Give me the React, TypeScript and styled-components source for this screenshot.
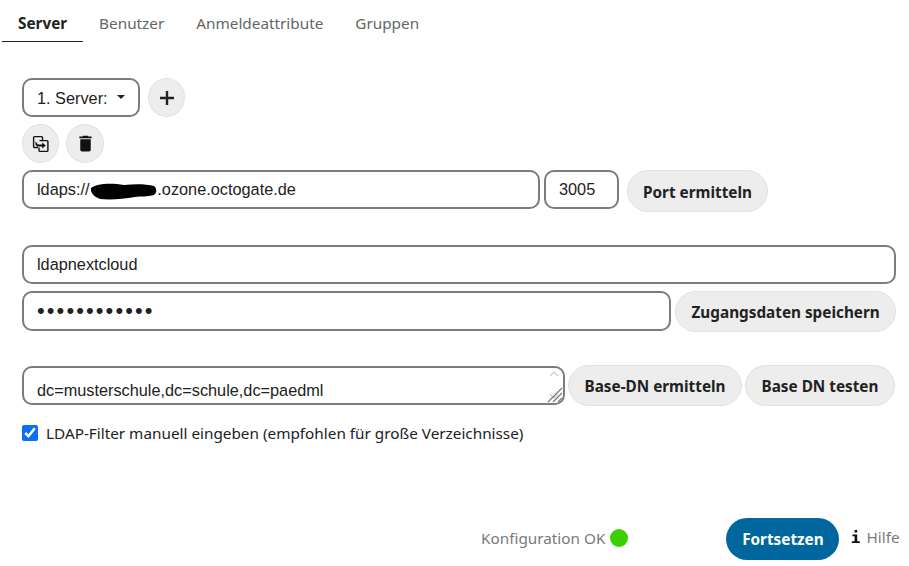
import React from 'react'
import styled, { createGlobalStyle } from 'styled-components'

const UI_FONT = `"Noto Sans", "Open Sans", sans-serif`
const FIELD_FONT = `"Liberation Sans", Arial, sans-serif`

const GlobalStyle = createGlobalStyle`
  html, body {
    margin: 0;
    padding: 0;
    background: #fff;
  }
  * {
    box-sizing: border-box;
  }
`

const App: React.FC = () => {
  return (
    <>
      <GlobalStyle />
      <Page>
        <Tabs>
          <Tab $active>Server</Tab>
          <Tab>Benutzer</Tab>
          <Tab>Anmeldeattribute</Tab>
          <Tab>Gruppen</Tab>
        </Tabs>

        <Form>
          <Row>
            <ServerSelect>
              1. Server:
              <Caret />
            </ServerSelect>
            <IconButton aria-label="Server hinzufügen">
              <svg width="24" height="24" viewBox="0 0 24 24">
                <path d="M19 13.2h-5.8V19h-2.4v-5.8H5v-2.4h5.8V5h2.4v5.8H19z" fill="#222" />
              </svg>
            </IconButton>
          </Row>

          <ActionRow>
            <IconButton aria-label="Konfiguration kopieren">
              <svg width="18" height="18" viewBox="0 0 18 18" fill="none">
                <path
                  d="M6 12.5H2.6a1 1 0 0 1-1-1V2.6a1 1 0 0 1 1-1h6.9a1 1 0 0 1 1 1V5.5"
                  stroke="#111"
                  strokeWidth="1.4"
                />
                <path
                  d="M7.5 5.6h7.4a1 1 0 0 1 1 1v8.8a1 1 0 0 1-1 1H8a1 1 0 0 1-1-1V12.5"
                  stroke="#111"
                  strokeWidth="1.4"
                />
                <path d="M3.5 6.2 6 9.4h4.2V7.6l3.6 2.9-3.6 2.9v-1.8H5L3.5 9.5z" fill="#111" />
              </svg>
            </IconButton>
            <IconButton aria-label="Konfiguration löschen" $wide>
              <svg width="21" height="21" viewBox="0 0 24 24">
                <path
                  d="M19 4h-3.5l-1-1h-5l-1 1H5v2h14M6 19a2 2 0 0 0 2 2h8a2 2 0 0 0 2-2V7H6z"
                  fill="#111"
                />
              </svg>
            </IconButton>
          </ActionRow>

          <HostRow>
            <HostField>
              <Field $width={518} readOnly value={'ldaps://' + ' '.repeat(15) + '.ozone.octogate.de'} />
              <Redaction width="68" height="18" viewBox="0 0 68 18">
                <path
                  d="M1 6C8 1 22 1 34 3c11-1 22-1 30 1 3 2 3 7 0 9-7 2-13 1-19 2-12 2-24 3-35 2C4 15 0 10 1 6z"
                  fill="#000"
                />
              </Redaction>
            </HostField>
            <Field $width={75} readOnly value="3005" />
            <PortButton>Port ermitteln</PortButton>
          </HostRow>

          <CredentialsBlock>
            <Field readOnly value="ldapnextcloud" />
            <PasswordRow>
              <PasswordField type="password" readOnly value="geheimgeheim" />
              <PillButton>Zugangsdaten speichern</PillButton>
            </PasswordRow>
          </CredentialsBlock>

          <BaseRow>
            <TextAreaBox>
              <BaseText>dc=musterschule,dc=schule,dc=paedml</BaseText>
              <Spinner width="12" height="34" viewBox="0 0 12 34" fill="none">
                <path d="M2 8l4-4 4 4" stroke="#d6d6d6" strokeWidth="1.6" />
                <path d="M2 26l4 4 4-4" stroke="#d6d6d6" strokeWidth="1.6" />
              </Spinner>
              <Grip width="16" height="16" viewBox="0 0 16 16" fill="none">
                <path d="M1 15 15 1M6 15l9-9M11 15l4-4" stroke="#777" strokeWidth="1.2" />
              </Grip>
            </TextAreaBox>
            <PillButton>Base-DN ermitteln</PillButton>
            <PillButton>Base DN testen</PillButton>
          </BaseRow>

          <CheckRow>
            <CheckBox type="checkbox" defaultChecked />
            LDAP-Filter manuell eingeben (empfohlen für große Verzeichnisse)
          </CheckRow>
        </Form>

        <Footer>
          <Status>
            Konfiguration OK
            <StatusDot />
          </Status>
          <PrimaryButton>Fortsetzen</PrimaryButton>
          <HelpLink>
            <svg width="10" height="14" viewBox="0 0 10 14">
              <path d="M3.6 0h2.6v2.6H3.6zM1.4 4.4h4.8v6.8h2.6V13H.9v-1.8h2.7V6.2H1.4z" fill="#111" />
            </svg>
            Hilfe
          </HelpLink>
        </Footer>
      </Page>
    </>
  )
}

const Page = styled.div`
  width: 909px;
  height: 566px;
  padding-left: 2px;
  display: flex;
  flex-direction: column;
  overflow: hidden;
  font-family: ${UI_FONT};
  color: #222;
`

const Tabs = styled.div`
  display: flex;
  height: 42px;
`

const Tab = styled.div<{ $active?: boolean }>`
  height: 42px;
  padding: 5px 16px 0;
  display: flex;
  align-items: center;
  font-size: 15.3px;
  font-weight: ${(p) => (p.$active ? 700 : 400)};
  color: ${(p) => (p.$active ? '#222' : '#666')};
  border-bottom: 1px solid ${(p) => (p.$active ? '#222' : 'transparent')};
`

const Form = styled.div`
  padding: 36px 13px 0 20px;
  display: flex;
  flex-direction: column;
`

const Row = styled.div`
  display: flex;
  gap: 8px;
`

const ActionRow = styled(Row)`
  margin-top: 7px;
  gap: 7px;
`

const ServerSelect = styled.div`
  width: 118px;
  height: 39px;
  border: 2px solid #7c7c7c;
  border-radius: 10px;
  padding: 1px 0 0 13px;
  display: flex;
  align-items: center;
  font-family: ${FIELD_FONT};
  font-size: 16.3px;
  color: #222;
`

const Caret = styled.span`
  margin-left: 9px;
  margin-top: -3px;
  border-left: 4px solid transparent;
  border-right: 4px solid transparent;
  border-top: 4px solid #222;
`

const IconButton = styled.button<{ $wide?: boolean }>`
  width: ${(p) => (p.$wide ? 38 : 37)}px;
  height: 39px;
  padding: 0;
  display: flex;
  align-items: center;
  justify-content: center;
  background: #ededed;
  border: 1px solid #e2e2e2;
  border-radius: 50%;
`

const HostRow = styled(Row)`
  margin-top: 7px;
  gap: 4px;
`

const HostField = styled.div`
  position: relative;
  display: flex;
`

const Field = styled.input<{ $width?: number }>`
  width: ${(p) => (p.$width ? `${p.$width}px` : '100%')};
  height: 39px;
  border: 2px solid #7c7c7c;
  border-radius: 10px;
  padding: 0 13px;
  font-family: ${FIELD_FONT};
  font-size: 16.3px;
  color: #222;
  background: #fff;
  outline: none;
`

const Redaction = styled.svg`
  position: absolute;
  left: 68px;
  top: 12px;
`

const PillButton = styled.button`
  height: 41px;
  flex: none;
  padding: 0 15.5px;
  background: #ededed;
  border: 1px solid #e2e2e2;
  border-radius: 21px;
  font-family: ${UI_FONT};
  font-size: 15.3px;
  font-weight: 700;
  color: #222;
`

const PortButton = styled(PillButton)`
  margin-left: 4px;
  width: 141px;
  height: 42px;
  padding: 2px 0 0;
`

const CredentialsBlock = styled.div`
  margin-top: 33px;
  display: flex;
  flex-direction: column;
  gap: 7px;
`

const PasswordRow = styled.div`
  display: flex;
  gap: 4px;
`

const PasswordField = styled(Field)`
  flex: none;
  width: 649px;
  height: 40px;
  letter-spacing: 2.1px;
  font-size: 22px;
`

const BaseRow = styled.div`
  margin-top: 33px;
  display: flex;
  align-items: center;
  gap: 3px;
`

const TextAreaBox = styled.div`
  position: relative;
  flex: none;
  width: 543px;
  height: 39px;
  border: 2px solid #7c7c7c;
  border-radius: 10px;
  overflow: hidden;
  font-family: ${FIELD_FONT};
  font-size: 16.3px;
  color: #222;
`

const BaseText = styled.div`
  padding: 13px 0 0 13px;
  line-height: 18px;
`

const Spinner = styled.svg`
  position: absolute;
  right: 3px;
  top: 0;
`

const Grip = styled.svg`
  position: absolute;
  right: 0;
  bottom: 0;
`

const CheckRow = styled.label`
  margin-top: 17px;
  display: flex;
  align-items: center;
  gap: 8px;
  height: 20px;
  font-size: 15.3px;
  color: #222;
`

const CheckBox = styled.input`
  width: 16px;
  height: 16px;
  margin: 0;
  accent-color: #0b6ef3;
`

const Footer = styled.div`
  margin-top: 75px;
  padding-left: 479px;
  display: flex;
  align-items: center;
`

const Status = styled.div`
  display: flex;
  align-items: center;
  gap: 5px;
  margin-bottom: 2px;
  font-size: 15.3px;
  color: #7a7a7a;
`

const StatusDot = styled.span`
  width: 18px;
  height: 18px;
  border-radius: 50%;
  background: #3cd000;
`

const PrimaryButton = styled.button`
  margin-left: 98px;
  width: 113px;
  height: 42px;
  padding: 0;
  background: #00679e;
  border: none;
  border-radius: 21px;
  font-family: ${UI_FONT};
  font-size: 15.3px;
  font-weight: 700;
  color: #fff;
`

const HelpLink = styled.div`
  margin-left: 12px;
  margin-bottom: 5px;
  display: flex;
  align-items: center;
  gap: 5px;
  font-size: 15.3px;
  color: #7a7a7a;
`

export default App
